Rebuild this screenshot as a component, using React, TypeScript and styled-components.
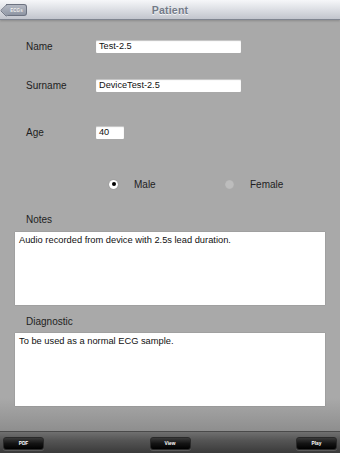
import React from "react";
import styled, { createGlobalStyle } from "styled-components";

const Global = createGlobalStyle`
  html, body { margin: 0; padding: 0; background: #a9a9a9; }
  * { box-sizing: border-box; }
`;

const Page = styled.div`
  width: 340px;
  height: 453px;
  display: flex;
  flex-direction: column;
  font-family: "Liberation Sans", Arial, Helvetica, sans-serif;
  background: #a9a9a9;
  overflow: hidden;
`;

const NavBar = styled.header`
  position: relative;
  height: 20px;
  flex: 0 0 20px;
  display: flex;
  align-items: center;
  justify-content: center;
  background: linear-gradient(#f6f7f9 0%, #dfe1e6 45%, #c2c5cd 100%);
  border-bottom: 1px solid #808590;
  box-shadow: 0 1px 2px rgba(0, 0, 0, 0.18);
`;

const Title = styled.div`
  font-size: 10.5px;
  font-weight: bold;
  color: #737a88;
  text-shadow: 0 1px 0 rgba(255, 255, 255, 0.8);
  letter-spacing: 0.2px;
`;

const BackButton = styled.div`
  position: absolute;
  left: 6px;
  top: 4px;
  height: 12px;
  width: 21px;
  display: flex;
  align-items: center;
  justify-content: center;
  padding-left: 1px;
  background: linear-gradient(#b4b9c3, #8e95a3);
  border: 1px solid #6c7280;
  border-left: none;
  border-radius: 0 3px 3px 0;
  font-size: 4.6px;
  font-weight: bold;
  color: #fff;
  text-shadow: 0 -0.5px 0 rgba(0, 0, 0, 0.4);

  &::before {
    content: "";
    position: absolute;
    left: -4px;
    top: 1.2px;
    width: 7.5px;
    height: 7.5px;
    transform: rotate(45deg);
    background: linear-gradient(135deg, #b4b9c3, #8e95a3);
    border-left: 1px solid #6c7280;
    border-bottom: 1px solid #6c7280;
    border-radius: 0 0 0 1.5px;
    z-index: 0;
  }
`;

const BackLabel = styled.span`
  position: relative;
  z-index: 1;
`;

const Content = styled.main`
  flex: 1;
  display: flex;
  flex-direction: column;
  padding: 0 15px;
  background: linear-gradient(#a9a9a9 0%, #a9a9a9 92%, #8e8e8e 100%);
`;

const FieldRow = styled.div<{ $top: number }>`
  margin-top: ${(p) => p.$top}px;
  display: grid;
  grid-template-columns: 70px auto;
  align-items: center;
  padding-left: 11px;
  height: 13px;
`;

const Label = styled.span`
  font-size: 10px;
  color: #1e1e1e;
`;

const TextInput = styled.div<{ $width: number }>`
  width: ${(p) => p.$width}px;
  height: 13px;
  background: #fff;
  border-radius: 1px;
  box-shadow: inset 0 1px 1px rgba(0, 0, 0, 0.25);
  font-size: 9.2px;
  color: #111;
  padding: 0 3px;
  display: flex;
  align-items: center;
  line-height: 1;
`;

const RadioRow = styled.div`
  margin-top: 40px;
  height: 10px;
  display: flex;
  align-items: center;
  padding-left: 94px;
`;

const RadioOption = styled.div`
  width: 116px;
  flex: 0 0 116px;
  display: flex;
  align-items: center;
  gap: 16px;
`;

const RadioDot = styled.span<{ $checked?: boolean }>`
  width: 9px;
  height: 9px;
  border-radius: 50%;
  flex: 0 0 9px;
  display: flex;
  align-items: center;
  justify-content: center;
  background: ${(p) => (p.$checked ? "#fff" : "#bdbdbd")};
  box-shadow: ${(p) =>
    p.$checked ? "0 0 1px rgba(0,0,0,0.4)" : "inset 0 0 1px rgba(0,0,0,0.1)"};

  &::after {
    content: "";
    display: ${(p) => (p.$checked ? "block" : "none")};
    width: 4px;
    height: 4px;
    border-radius: 50%;
    background: #000;
  }
`;

const RadioLabel = styled.span`
  font-size: 10px;
  color: #1e1e1e;
`;

const SectionLabel = styled.div<{ $top: number }>`
  margin-top: ${(p) => p.$top}px;
  padding-left: 11px;
  height: 13px;
  display: flex;
  align-items: center;
  font-size: 10px;
  color: #1e1e1e;
`;

const TextArea = styled.div<{ $top: number }>`
  margin-top: ${(p) => p.$top}px;
  height: 73px;
  background: #fff;
  padding: 3px 4px;
  font-size: 9.3px;
  color: #111;
  line-height: 1.2;
  box-shadow: 0 0 1px rgba(0, 0, 0, 0.3);
`;

const Toolbar = styled.footer`
  flex: 0 0 22px;
  height: 22px;
  display: flex;
  align-items: center;
  justify-content: space-between;
  padding: 0 3px;
  background: linear-gradient(#707070 0%, #555 40%, #3a3a3a 100%);
  border-top: 1px solid #4a4a4a;
`;

const ToolButton = styled.div`
  width: 41px;
  height: 13px;
  margin-top: 2px;
  border-radius: 3px;
  border: 1px solid #2a2a2a;
  background: linear-gradient(#3a3a3a 0%, #141414 50%, #000 100%);
  box-shadow: 0 1px 0 rgba(255, 255, 255, 0.15);
  color: #fff;
  font-size: 4.8px;
  font-weight: bold;
  display: flex;
  align-items: center;
  justify-content: center;
`;

export default function App() {
  return (
    <Page>
      <Global />
      <NavBar>
        <BackButton>
          <BackLabel>ECGs</BackLabel>
        </BackButton>
        <Title>Patient</Title>
      </NavBar>
      <Content>
        <FieldRow $top={20}>
          <Label>Name</Label>
          <TextInput $width={145}>Test-2.5</TextInput>
        </FieldRow>
        <FieldRow $top={26}>
          <Label>Surname</Label>
          <TextInput $width={145}>DeviceTest-2.5</TextInput>
        </FieldRow>
        <FieldRow $top={34}>
          <Label>Age</Label>
          <TextInput $width={28}>40</TextInput>
        </FieldRow>
        <RadioRow>
          <RadioOption>
            <RadioDot $checked />
            <RadioLabel>Male</RadioLabel>
          </RadioOption>
          <RadioOption>
            <RadioDot />
            <RadioLabel>Female</RadioLabel>
          </RadioOption>
        </RadioRow>
        <SectionLabel $top={24}>Notes</SectionLabel>
        <TextArea $top={6}>Audio recorded from device with 2.5s lead duration.</TextArea>
        <SectionLabel $top={10}>Diagnostic</SectionLabel>
        <TextArea $top={5}>To be used as a normal ECG sample.</TextArea>
      </Content>
      <Toolbar>
        <ToolButton>PDF</ToolButton>
        <ToolButton>View</ToolButton>
        <ToolButton>Play</ToolButton>
      </Toolbar>
    </Page>
  );
}
